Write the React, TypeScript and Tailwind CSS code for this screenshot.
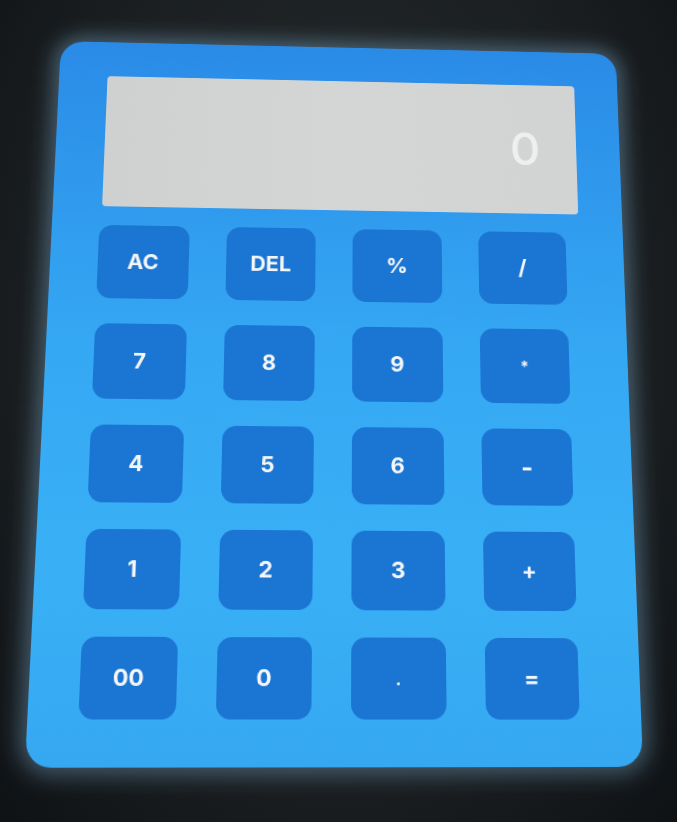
import clsx from 'clsx'

const KEYS = [
  'AC', 'DEL', '%', '/',
  '7', '8', '9', '*',
  '4', '5', '6', '-',
  '1', '2', '3', '+',
  '00', '0', '.', '=',
]

function Key({ label }: { label: string }) {
  const small = label === '*' || label === '.'
  return (
    <button
      className={clsx(
        'h-[77px] rounded-[14px] bg-[#1b75d3] text-[#f4f6f8] font-bold flex items-center justify-center',
        small ? 'text-[16px]' : label === '-' ? 'text-[26px]' : 'text-[22px]'
      )}
    >
      {label}
    </button>
  )
}

export default function App() {
  return (
    <div className="min-h-[822px] w-full bg-[radial-gradient(ellipse_at_50%_40%,#272c2d_0%,#1b1f21_60%,#0e1215_100%)] flex justify-center pt-[21px] font-['Inter','Liberation_Sans',sans-serif]">
      <div className="[transform:perspective(1000px)_rotateX(8.5deg)_rotateY(2deg)_rotateZ(0.3deg)] origin-center">
        <div className="w-[588px] rounded-[24px] bg-[linear-gradient(180deg,#2a8be7_0%,#35a8f3_45%,#39b0f6_75%,#35a8f1_100%)] shadow-[0_0_20px_7px_rgba(150,205,245,0.35)] px-[46px] pt-[38px] pb-[44px]">
          <div className="ml-[4px] h-[142px] rounded-[4px] bg-[linear-gradient(90deg,#cfd1d1_0%,#d4d6d6_50%,#d2d4d4_100%)] flex items-center justify-end pr-[38px]">
            <span className="text-[50px] font-medium text-[#eef0ef] leading-none">0</span>
          </div>
          <div className="mt-[20px] pl-[2px] pr-[14px] grid grid-cols-4 gap-x-[38px] gap-y-[26px]">
            {KEYS.map(k => (
              <Key key={k} label={k} />
            ))}
          </div>
        </div>
      </div>
    </div>
  )
}
